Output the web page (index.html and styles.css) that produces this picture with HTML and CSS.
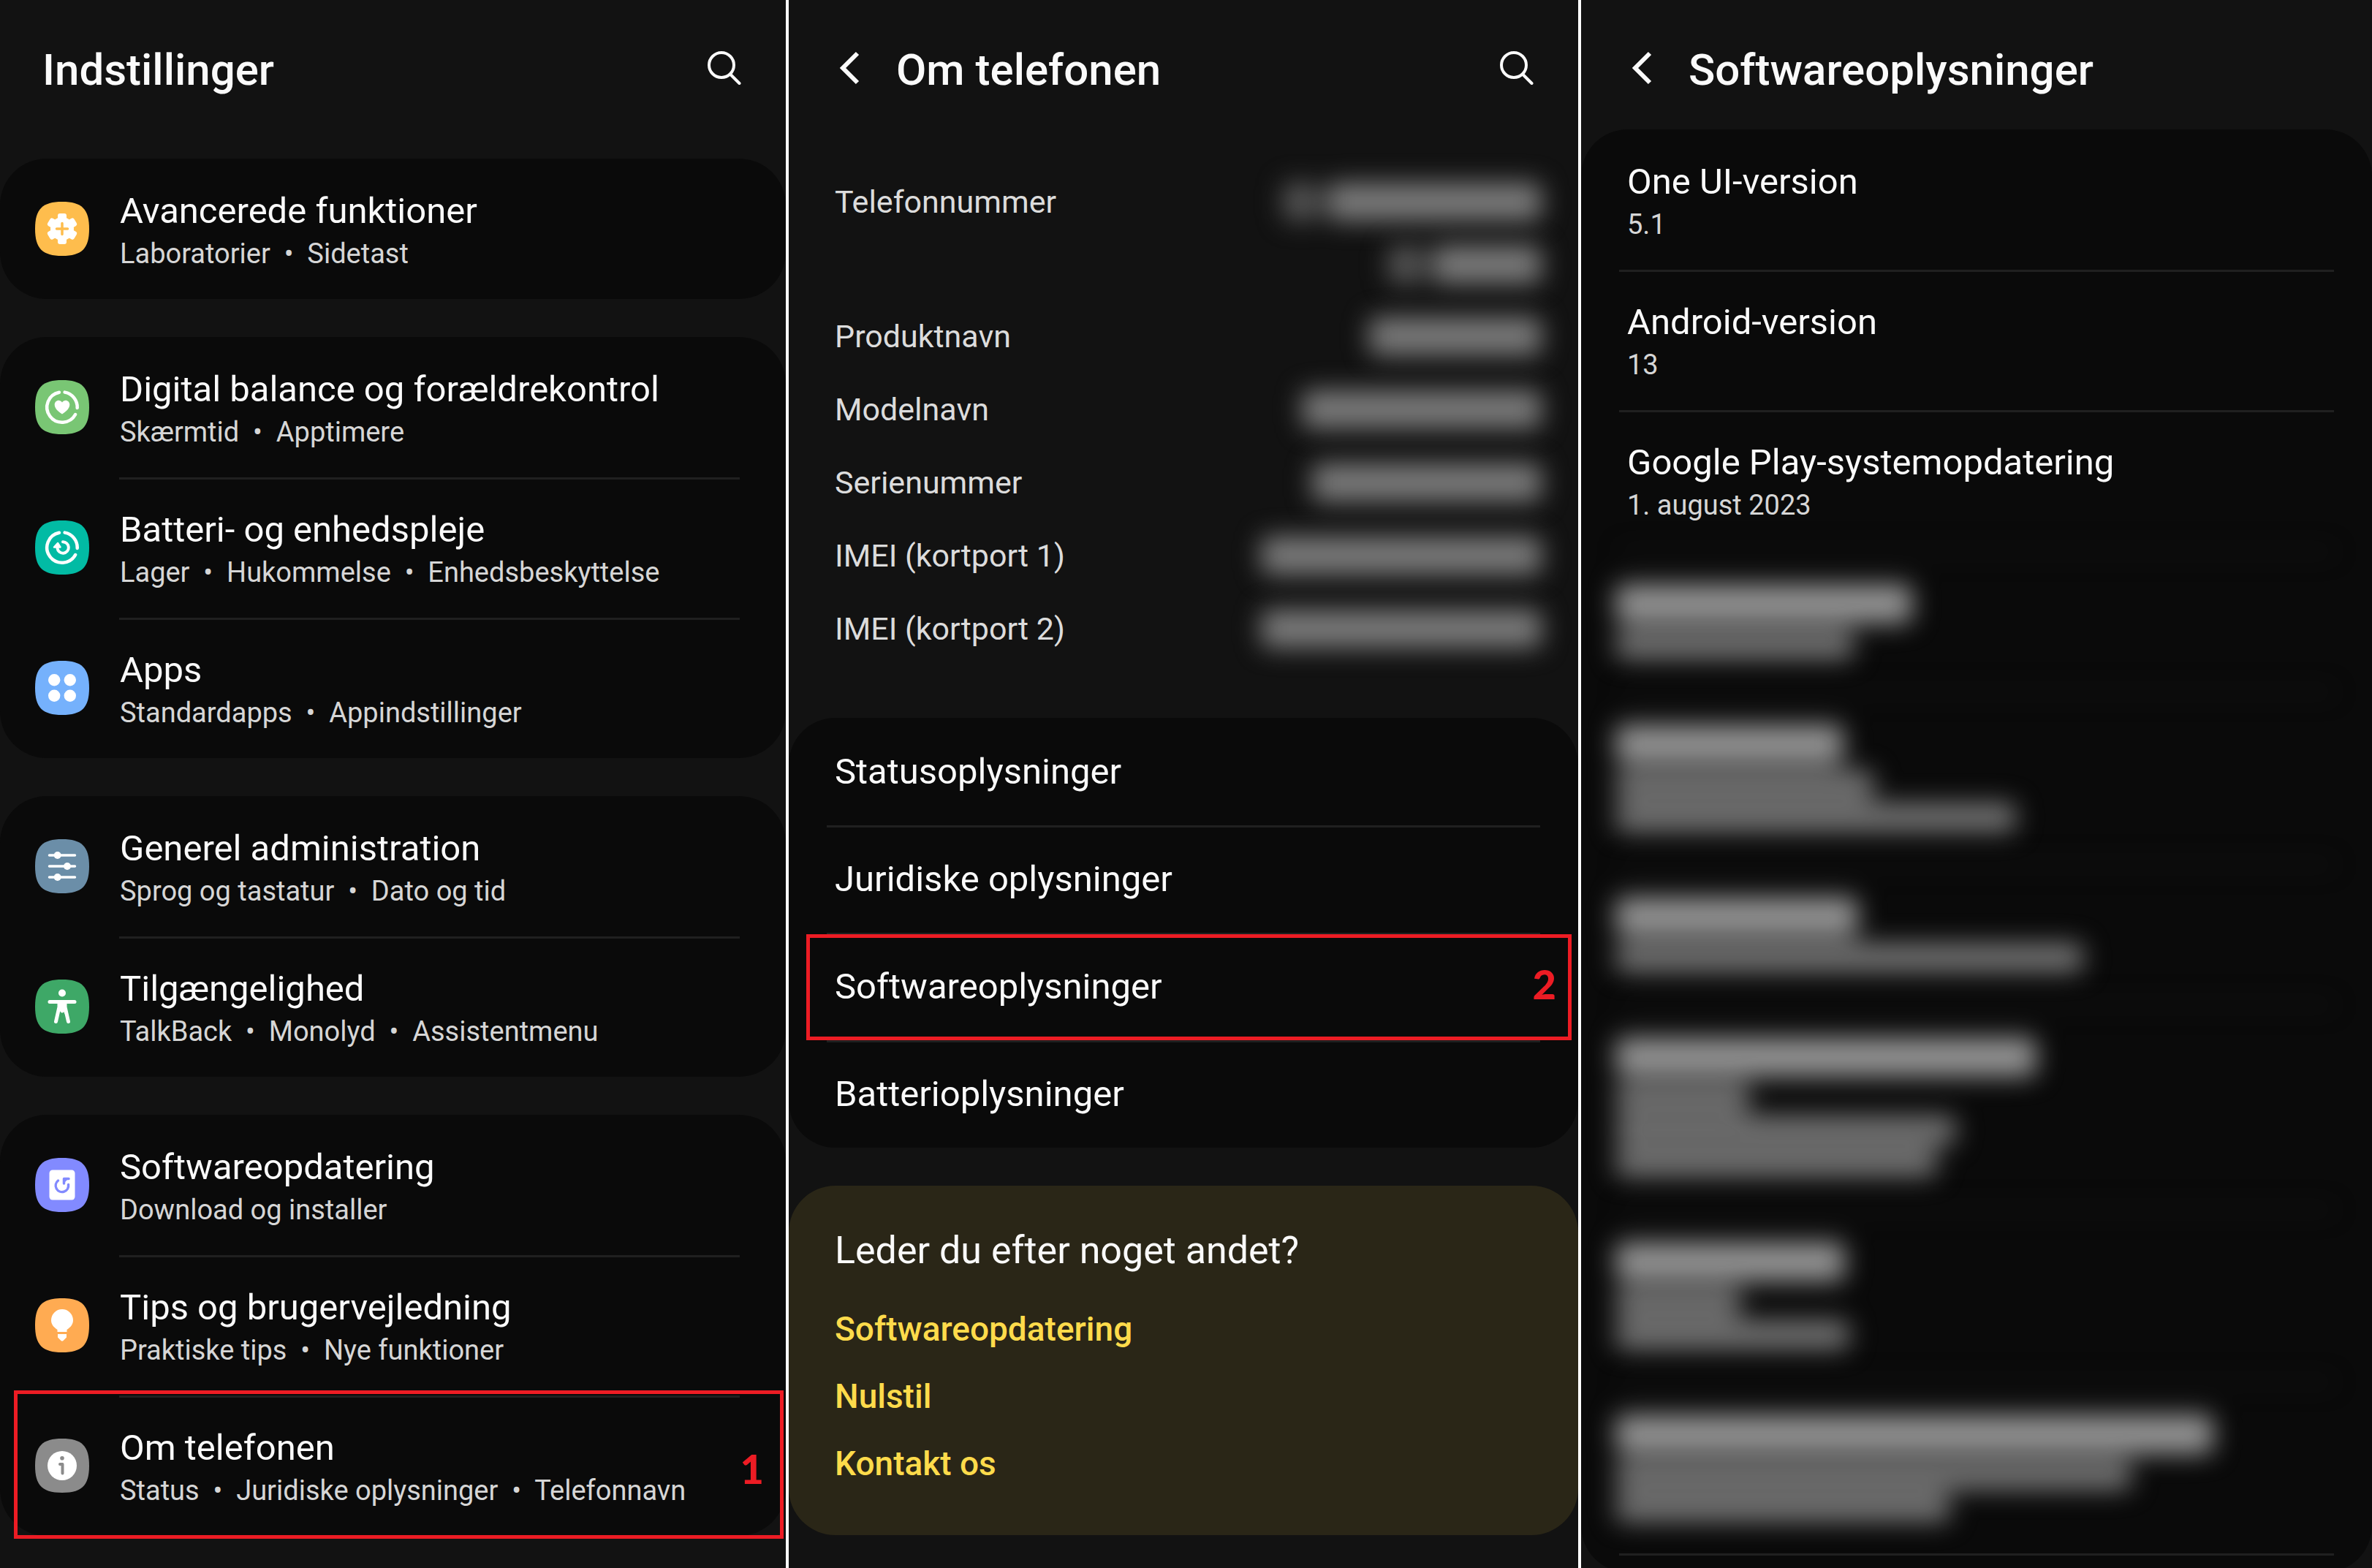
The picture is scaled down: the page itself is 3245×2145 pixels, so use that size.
FILE: index.html
```html
<!DOCTYPE html>
<html lang="da">
<head>
<meta charset="utf-8">
<meta name="viewport" content="width=device-width, initial-scale=1">
<title>Indstillinger – Om telefonen – Softwareoplysninger</title>
<link rel="stylesheet" href="styles.css">
</head>
<body>
<svg class="defs" aria-hidden="true">
  <symbol id="squircle" viewBox="0 0 74 74"><path d="M0 37C0 10 10 0 37 0S74 10 74 37 64 74 37 74 0 64 0 37Z"/></symbol>
  <symbol id="search" viewBox="0 0 46 46"><g fill="none" stroke="#fafafa" stroke-width="4" stroke-linecap="round"><circle cx="19" cy="19" r="17"/><path d="M31 31.5 43.500 44"/></g></symbol>
  <symbol id="back" viewBox="0 0 28 46"><path d="M25 3 5 23 25 43" fill="none" stroke="#fafafa" stroke-width="6"/></symbol>
  <symbol id="ring" viewBox="0 0 74 74"><path d="M40.600 16.600A20.700 20.700 0 0 1 57.700 38M55.100 47A20.700 20.700 0 1 1 33 16.700" fill="none" stroke="#fff" stroke-width="4.500" stroke-linecap="round"/></symbol>
</svg>
<main class="screens">

  <section class="screen">
    <header class="bar bar-root">
      <h1>Indstillinger</h1>
      <button class="icon-button" type="button" aria-label="Søg"><svg class="search"><use href="#search"/></svg></button>
    </header>
    <nav class="cards cards-root">
      <ul class="card icon-list">
        <li><a href="#avanceret">
          <svg class="tile" viewBox="0 0 74 74" fill="#febd4d"><use href="#squircle"/><g fill="#fff"><circle cx="37" cy="37" r="16"/><rect x="31" y="16" width="12" height="42" rx="3"/><rect x="31" y="16" width="12" height="42" rx="3" transform="rotate(60 37 37)"/><rect x="31" y="16" width="12" height="42" rx="3" transform="rotate(120 37 37)"/></g><path d="M37 29.500v15M29.500 37h15" stroke="#febd4d" stroke-width="3.500" stroke-linecap="round"/></svg>
          <div><h2>Avancerede funktioner</h2><p>Laboratorier &nbsp;•&nbsp; Sidetast</p></div></a></li>
      </ul>
      <ul class="card icon-list">
        <li><a href="#balance">
          <svg class="tile" viewBox="0 0 74 74" fill="#79c674"><use href="#squircle"/><use href="#ring"/><path fill="#fff" d="M37 46.500C31 42.500 26.700 38.500 26.700 33.500 26.700 27.500 34 25.500 37 30.500 40 25.500 47.300 27.500 47.300 33.500 47.300 38.500 43 42.500 37 46.500Z"/></svg>
          <div><h2>Digital balance og forældrekontrol</h2><p>Skærmtid &nbsp;•&nbsp; Apptimere</p></div></a></li>
        <li><a href="#batteri">
          <svg class="tile" viewBox="0 0 74 74" fill="#02bba4"><use href="#squircle"/><use href="#ring"/><path d="M38 29.300A7.700 7.700 0 1 1 30.500 38" fill="none" stroke="#fff" stroke-width="4" stroke-linecap="round"/><path d="M31 31 34.500 36.500H26Z" fill="#fff" stroke="#fff" stroke-width="2.500" stroke-linejoin="round"/></svg>
          <div><h2>Batteri- og enhedspleje</h2><p>Lager &nbsp;•&nbsp; Hukommelse &nbsp;•&nbsp; Enhedsbeskyttelse</p></div></a></li>
        <li><a href="#apps">
          <svg class="tile" viewBox="0 0 74 74" fill="#75b1fc"><use href="#squircle"/><g fill="#fff"><circle cx="26.200" cy="26.200" r="8.200"/><circle cx="47.800" cy="26.200" r="8.200"/><circle cx="26.200" cy="47.800" r="8.200"/><circle cx="47.800" cy="47.800" r="8.200"/></g></svg>
          <div><h2>Apps</h2><p>Standardapps &nbsp;•&nbsp; Appindstillinger</p></div></a></li>
      </ul>
      <ul class="card icon-list">
        <li><a href="#generel">
          <svg class="tile" viewBox="0 0 74 74" fill="#6b8ea8"><use href="#squircle"/><path d="M19.500 22h35M19.500 37h35M19.500 52h35" stroke="#fff" stroke-width="3.500" stroke-linecap="round"/><g fill="#fff"><circle cx="30.700" cy="22" r="5"/><circle cx="44" cy="37" r="5"/><circle cx="30.700" cy="52" r="5"/></g></svg>
          <div><h2>Generel administration</h2><p>Sprog og tastatur &nbsp;•&nbsp; Dato og tid</p></div></a></li>
        <li><a href="#tilgaengelighed">
          <svg class="tile" viewBox="0 0 74 74" fill="#3ea867"><use href="#squircle"/><circle cx="37" cy="18.500" r="5" fill="#fff"/><path d="M20 30.500H54" stroke="#fff" stroke-width="5" stroke-linecap="round"/><path d="M33 31h8v6.500L45.500 57.500M33 31v6.500L28.500 57.500M33.500 37 37 43 40.500 37Z" fill="#fff" stroke="#fff" stroke-width="5" stroke-linecap="round" stroke-linejoin="round"/><path d="M37 45.500 33.500 60h7Z" fill="#3ea867"/></svg>
          <div><h2>Tilgængelighed</h2><p>TalkBack &nbsp;•&nbsp; Monolyd &nbsp;•&nbsp; Assistentmenu</p></div></a></li>
      </ul>
      <ul class="card icon-list">
        <li><a href="#opdatering">
          <svg class="tile" viewBox="0 0 74 74" fill="#828aff"><use href="#squircle"/><rect x="19.500" y="16.500" width="35" height="41" rx="4.500" fill="#fff"/><path d="M31.500 31A8.700 8.700 0 1 0 45.500 36.500" fill="none" stroke="#828aff" stroke-width="3.500" stroke-linecap="round"/><path d="M39.500 35V28.500H46" fill="none" stroke="#828aff" stroke-width="3.500" stroke-linecap="round" stroke-linejoin="round"/><path d="M39 28h7l-7 7Z" fill="#828aff"/></svg>
          <div><h2>Softwareopdatering</h2><p>Download og installer</p></div></a></li>
        <li><a href="#tips">
          <svg class="tile" viewBox="0 0 74 74" fill="#ffab52"><use href="#squircle"/><path fill="#fff" d="M37 15a15 15 0 0 1 15 15c0 6-3.500 9.500-8.500 13v3h-13v-3C25.500 39.500 22 36 22 30A15 15 0 0 1 37 15ZM31 49h12v4.500l-4.500 4.500q-1.500 1.200-3 0L31 53.500Z"/></svg>
          <div><h2>Tips og brugervejledning</h2><p>Praktiske tips &nbsp;•&nbsp; Nye funktioner</p></div></a></li>
        <li class="step step-one"><a href="#om">
          <svg class="tile" viewBox="0 0 74 74" fill="#8b8b8b"><use href="#squircle"/><circle cx="37" cy="37" r="20" fill="#fff"/><circle cx="37" cy="26.700" r="2.800"/><path d="M34 35h3.500v12.500" fill="none" stroke="#8b8b8b" stroke-width="4" stroke-linecap="round" stroke-linejoin="round"/></svg>
          <div><h2>Om telefonen</h2><p>Status &nbsp;•&nbsp; Juridiske oplysninger &nbsp;•&nbsp; Telefonnavn</p></div></a>
          <strong class="marker">1</strong></li>
      </ul>
    </nav>
  </section>

  <section class="screen">
    <header class="bar">
      <button class="icon-button" type="button" aria-label="Tilbage"><svg class="back"><use href="#back"/></svg></button>
      <h1>Om telefonen</h1>
      <button class="icon-button" type="button" aria-label="Søg"><svg class="search"><use href="#search"/></svg></button>
    </header>
    <dl class="facts">
      <div><dt>Telefonnummer</dt><dd><span class="hidden-value"><i class="dim" style="width:48px"></i><i style="width:294px"></i></span><span class="hidden-value"><i class="dim" style="width:48px"></i><i style="width:150px"></i></span></dd></div>
      <div><dt>Produktnavn</dt><dd><span class="hidden-value"><i style="width:236px"></i></span></dd></div>
      <div><dt>Modelnavn</dt><dd><span class="hidden-value"><i style="width:328px"></i></span></dd></div>
      <div><dt>Serienummer</dt><dd><span class="hidden-value"><i style="width:314px"></i></span></dd></div>
      <div><dt>IMEI (kortport 1)</dt><dd><span class="hidden-value"><i style="width:384px"></i></span></dd></div>
      <div><dt>IMEI (kortport 2)</dt><dd><span class="hidden-value"><i style="width:384px"></i></span></dd></div>
    </dl>
    <div class="cards">
      <ul class="card plain-list">
        <li><a href="#status">Statusoplysninger</a></li>
        <li><a href="#juridisk">Juridiske oplysninger</a></li>
        <li class="step step-two"><a href="#software">Softwareoplysninger</a><strong class="marker">2</strong></li>
        <li><a href="#batterioplysninger">Batterioplysninger</a></li>
      </ul>
      <section class="card suggestions">
        <h2>Leder du efter noget andet?</h2>
        <a href="#opdatering">Softwareopdatering</a>
        <a href="#nulstil">Nulstil</a>
        <a href="#kontakt">Kontakt os</a>
      </section>
    </div>
  </section>

  <section class="screen">
    <header class="bar">
      <button class="icon-button" type="button" aria-label="Tilbage"><svg class="back"><use href="#back"/></svg></button>
      <h1>Softwareoplysninger</h1>
    </header>
    <ul class="card detail-list">
      <li><h2>One UI-version</h2><p>5.1</p></li>
      <li><h2>Android-version</h2><p>13</p></li>
      <li><h2>Google Play-systemopdatering</h2><p>1. august 2023</p></li>
      <li class="obscured"><b style="width:406px"></b><i style="width:326px"></i></li>
      <li class="obscured"><b style="width:312px"></b><i style="width:354px"></i><i style="width:548px"></i></li>
      <li class="obscured"><b style="width:332px"></b><i style="width:640px"></i></li>
      <li class="obscured"><b style="width:576px"></b><i style="width:184px"></i><i style="width:466px"></i><i style="width:440px"></i></li>
      <li class="obscured"><b style="width:314px"></b><i style="width:172px"></i><i style="width:320px"></i></li>
      <li class="obscured"><b style="width:818px"></b><i style="width:706px"></i><i style="width:458px"></i></li>
      <li class="tail"></li>
    </ul>
  </section>

</main>
</body>
</html>
```
FILE: styles.css
```css
* { box-sizing: border-box; }

body {
  margin: 0;
  background: #121212;
  color: #fafafa;
  font-family: Roboto, "Noto Sans", sans-serif;
  font-size: 49px;
  line-height: 56px;
}

h1, h2, p, ul, dl, dd { margin: 0; padding: 0; }
ul { list-style: none; }
a { color: inherit; text-decoration: none; }
.defs { position: absolute; width: 0; height: 0; }

/* Three phone screens side by side, split by thin white rules */
.screens {
  display: grid;
  grid-template-columns: 1075fr 1080fr 1082fr;
  gap: 4px;
  height: 100vh;
  background: #fff;
}
.screen {
  min-width: 0;
  overflow: hidden auto;
  scrollbar-width: none;
  background: #121212;
}

/* Title bar */
.bar {
  display: flex;
  align-items: flex-start;
  padding: 60px 61px 45px 69px;
}
.bar-root { padding-left: 58px; }
.bar h1 {
  flex: 1;
  font-size: 60px;
  font-weight: 500;
  line-height: 72px;
}
.icon-button {
  padding: 10px 0 0;
  border: 0;
  background: none;
}
.icon-button svg { display: block; }
.icon-button + h1 { padding-left: 50px; }
.search { width: 46px; height: 46px; }
.back { width: 28px; height: 46px; }

/* Cards */
.cards {
  display: flex;
  flex-direction: column;
  gap: 52px;
}
.cards-root { padding: 40px 0; }
.card {
  border-radius: 64px;
  background: #0a0a0a;
}
.card li { position: relative; }
.card li + li::before {
  content: "";
  position: absolute;
  top: 0;
  left: 52px;
  right: 52px;
  height: 3px;
  background: #202020;
}
.card h2 {
  font-size: 49px;
  font-weight: 400;
  line-height: 56px;
}
.card p {
  padding-top: 8px;
  color: #d6d6d6;
  font-size: 38px;
  line-height: 44px;
}

.icon-list a {
  display: flex;
  align-items: center;
  gap: 42px;
  height: 192px;
  padding: 0 48px;
}
.icon-list a div { padding-top: 4px; }
.icon-list.card li + li::before { left: 163px; right: 63px; }
.tile { flex: none; width: 74px; height: 74px; }

.plain-list a {
  display: flex;
  align-items: center;
  height: 147px;
  padding: 0 63px;
}

.detail-list li {
  min-height: 192px;
  padding: 44px 63px 40px;
}
.detail-list .tail { min-height: 0; padding: 13px 0; }

/* Numbered red highlight laid over a row */
.step::after {
  content: "";
  position: absolute;
  border: 5px solid #ed1c24;
  pointer-events: none;
}
.step-one::after { inset: -7px 3px -4px 19px; }
.step-two::after { inset: 2px 9px 0 24px; }
.marker {
  position: absolute;
  top: 50%;
  right: 30px;
  margin-top: -28px;
  color: #ed1c24;
  font-family: Lato, sans-serif;
  font-size: 56px;
  font-weight: 900;
  line-height: 64px;
}
.step-two .marker { margin-top: -36px; }

/* Phone facts with obscured values */
.facts {
  padding: 49px 50px 72px 63px;
  color: #dcdcdc;
  font-size: 43px;
  line-height: 100px;
}
.facts div {
  display: flex;
  justify-content: space-between;
}
.facts dd {
  display: flex;
  flex-direction: column;
  align-items: flex-end;
  gap: 34px;
  padding: 24px 0 22px;
}
.hidden-value {
  display: flex;
  gap: 12px;
  filter: blur(17px);
}
.hidden-value i { height: 52px; border-radius: 12px; background: #7a7a7a; }
.hidden-value .dim { background: #565656; }

/* Whole rows out of focus, separator included */
.detail-list .obscured { padding: 46px 47px 43px; filter: blur(17px); }
.obscured b, .obscured i { display: block; border-radius: 12px; }
.obscured b { height: 54px; margin-bottom: 9px; background: #929292; }
.obscured i { height: 40px; background: #727272; }
.obscured i + i { margin-top: 4px; }

/* Suggestions card */
.suggestions {
  display: flex;
  flex-direction: column;
  align-items: flex-start;
  padding: 59px 63px 52px;
  background: #2a2617;
}
.suggestions h2 {
  padding-bottom: 31px;
  font-size: 52px;
  line-height: 60px;
}
.suggestions a {
  color: #fedb4b;
  font-size: 46px;
  font-weight: 500;
  line-height: 92px;
}
```
